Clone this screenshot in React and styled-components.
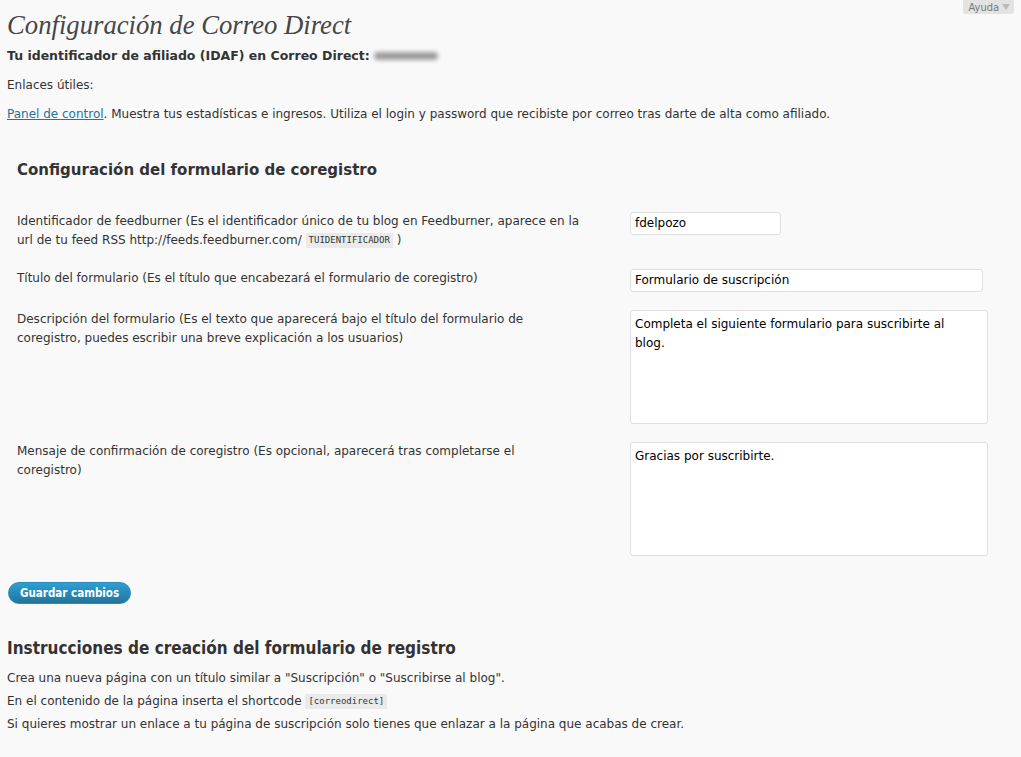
import React from "react";
import styled, { createGlobalStyle } from "styled-components";

const GlobalStyle = createGlobalStyle`
  html, body {
    margin: 0;
    padding: 0;
    background: #f9f9f9;
  }
  body {
    font-family: "DejaVu Sans", sans-serif;
    font-size: 12px;
    color: #333;
  }
`;

const Page = styled.div`
  padding: 0 7px 20px 7px;
`;

const Header = styled.div`
  display: flex;
  justify-content: space-between;
  align-items: flex-start;
`;

const Title = styled.h2`
  margin: 9px 0 0 0;
  font-family: "Liberation Serif", serif;
  font-style: italic;
  font-weight: normal;
  font-size: 26.7px;
  line-height: 32px;
  color: #464646;
`;

const HelpTab = styled.div`
  display: flex;
  align-items: center;
  gap: 3px;
  height: 14px;
  padding: 0 4px 0 6px;
  background: #e3e3e3;
  border-radius: 0 0 3px 3px;
  color: #777;
  font-family: "DejaVu Sans Condensed", "DejaVu Sans", sans-serif;
  font-size: 11px;
`;

const Caret = styled.span`
  width: 0;
  height: 0;
  border-left: 4px solid transparent;
  border-right: 4px solid transparent;
  border-top: 6px solid #bbb;
`;

const Strong = styled.p`
  margin: 6px 0 0 0;
  font-weight: bold;
  font-size: 12.5px;
  line-height: 18px;
  display: flex;
  align-items: center;
  gap: 4px;
`;

const Blur = styled.span`
  display: inline-block;
  width: 64px;
  height: 8px;
  background: #9c9c9c;
  border-radius: 4px;
  filter: blur(2px);
`;

const Para = styled.p`
  margin: ${(p) => p.$top || 11}px 0 0 0;
  line-height: 18px;
`;

const Link = styled.a`
  color: #21759b;
  text-decoration: underline;
`;

const Section = styled.div`
  padding: 0 10px;
  margin-top: 37px;
`;

const SectionTitle = styled.h3`
  margin: 0;
  font-size: 15px;
  line-height: 20px;
  font-weight: bold;
  color: #333;
`;

const FormGrid = styled.div`
  display: grid;
  grid-template-columns: 613px 1fr;
  row-gap: 18px;
  margin-top: 32px;
`;

const Label = styled.div`
  line-height: 19px;
  padding: 0 49px 1px 0;
  font-size: 12px;
`;

const Code = styled.code`
  display: inline-block;
  font-family: "DejaVu Sans Mono", monospace;
  font-size: 9px;
  line-height: 15px;
  background: #eaeaea;
  padding: 0 3px;
  vertical-align: middle;
  color: #333;
`;

const Field = styled.div`
  height: ${(p) => p.$h || 23}px;
  width: ${(p) => p.$w}px;
  box-sizing: border-box;
  background: #fff;
  border: 1px solid #dfdfdf;
  border-radius: 3px;
  padding: ${(p) => (p.$multi ? "4px 20px 4px 4px" : "0 4px")};
  display: ${(p) => (p.$multi ? "block" : "flex")};
  align-items: center;
  font-size: 12px;
  line-height: 19px;
  color: #000;
`;

const Button = styled.button`
  margin-top: 26px;
  margin-left: 1px;
  height: 22px;
  padding: 0 11px;
  border: 1px solid #298cba;
  border-radius: 11px;
  background: linear-gradient(to bottom, #2e9fd2, #21759b);
  color: #fff;
  font-family: "DejaVu Sans Condensed", "DejaVu Sans", sans-serif;
  font-weight: bold;
  font-size: 11.5px;
  cursor: pointer;
`;

const Subtitle = styled.h3`
  margin: 33px 0 0 0;
  font-family: "DejaVu Sans Condensed", "DejaVu Sans", sans-serif;
  font-size: 17px;
  line-height: 22px;
  font-weight: bold;
  color: #333;
`;

const Lines = styled.div`
  margin-top: 10px;
  display: flex;
  flex-direction: column;
  gap: 5px;
`;

const Line = styled.div`
  line-height: 18px;
`;

const rows = [
  {
    label: (
      <>
        Identificador de feedburner (Es el identificador único de tu blog en Feedburner, aparece en la
        url de tu feed RSS http://feeds.feedburner.com/ <Code>TUIDENTIFICADOR</Code> )
      </>
    ),
    value: "fdelpozo",
    w: 151,
  },
  {
    label: "Título del formulario (Es el título que encabezará el formulario de coregistro)",
    value: "Formulario de suscripción",
    w: 353,
  },
  {
    label:
      "Descripción del formulario (Es el texto que aparecerá bajo el título del formulario de coregistro, puedes escribir una breve explicación a los usuarios)",
    value: "Completa el siguiente formulario para suscribirte al blog.",
    w: 358,
    h: 114,
    multi: true,
  },
  {
    label:
      "Mensaje de confirmación de coregistro (Es opcional, aparecerá tras completarse el coregistro)",
    value: "Gracias por suscribirte.",
    w: 358,
    h: 114,
    multi: true,
  },
];

export default function App() {
  return (
    <Page>
      <GlobalStyle />
      <Header>
        <Title>Configuración de Correo Direct</Title>
        <HelpTab>
          Ayuda <Caret />
        </HelpTab>
      </Header>
      <Strong>
        Tu identificador de afiliado (IDAF) en Correo Direct: <Blur />
      </Strong>
      <Para $top={11}>Enlaces útiles:</Para>
      <Para $top={11}>
        <Link href="#">Panel de control</Link>. Muestra tus estadísticas e ingresos. Utiliza el login y
        password que recibiste por correo tras darte de alta como afiliado.
      </Para>

      <Section>
        <SectionTitle>Configuración del formulario de coregistro</SectionTitle>
        <FormGrid>
          {rows.map((r, i) => (
            <React.Fragment key={i}>
              <Label>{r.label}</Label>
              <div>
                <Field $w={r.w} $h={r.h} $multi={r.multi}>
                  {r.value}
                </Field>
              </div>
            </React.Fragment>
          ))}
        </FormGrid>
      </Section>

      <Button type="button">Guardar cambios</Button>

      <Subtitle>Instrucciones de creación del formulario de registro</Subtitle>
      <Lines>
        <Line>Crea una nueva página con un título similar a "Suscripción" o "Suscribirse al blog".</Line>
        <Line>
          En el contenido de la página inserta el shortcode <Code>[correodirect]</Code>
        </Line>
        <Line>
          Si quieres mostrar un enlace a tu página de suscripción solo tienes que enlazar a la página que
          acabas de crear.
        </Line>
      </Lines>
    </Page>
  );
}
